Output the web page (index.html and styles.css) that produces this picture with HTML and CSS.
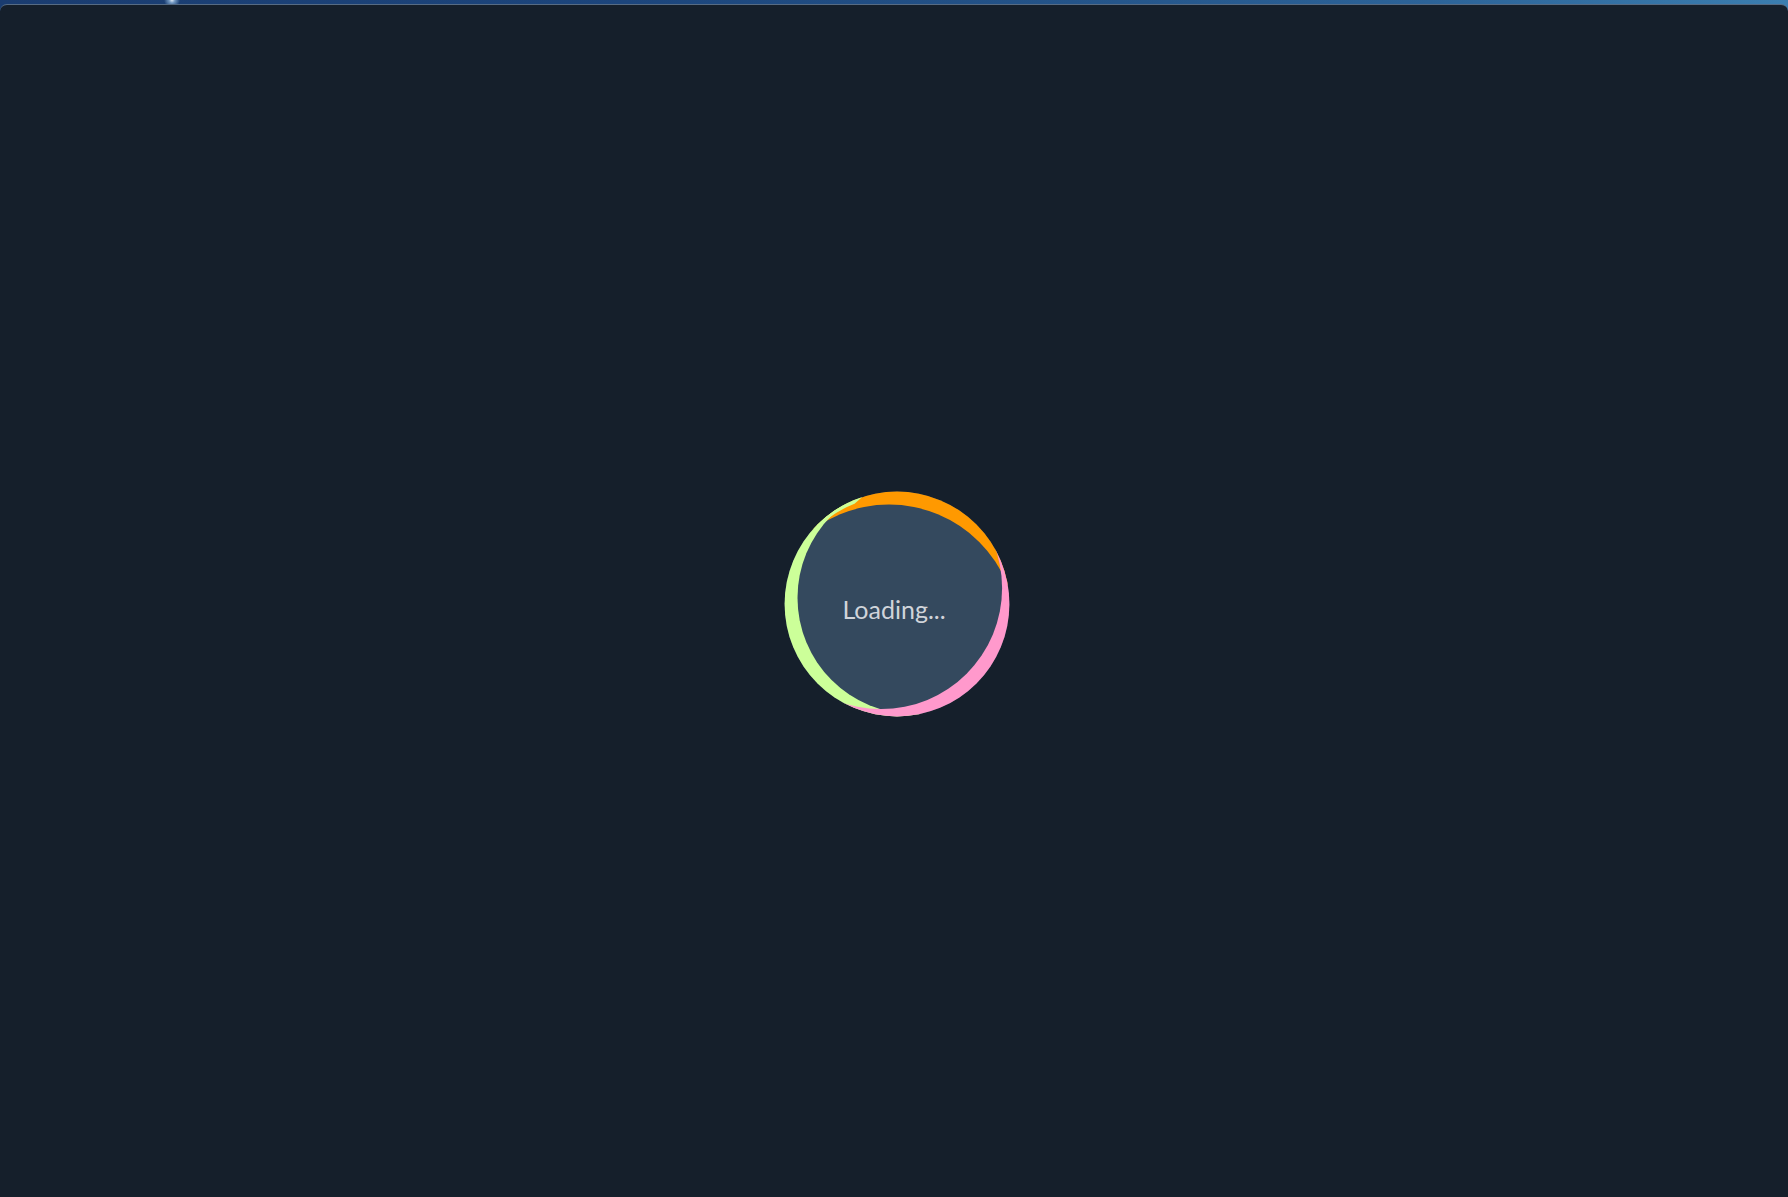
FILE: index.html
```html
<!DOCTYPE html>
<html lang="en">
<head>
<meta charset="utf-8">
<title>Loading</title>
<link rel="stylesheet" href="styles.css">
</head>
<body>
  <main class="window">
    <div class="loader">
      <svg class="loader-art" width="226" height="226" viewBox="783.5 490.5 226 226" aria-hidden="true">
        <defs>
          <mask id="m-orange" maskUnits="userSpaceOnUse" x="700" y="400" width="400" height="400">
            <rect x="700" y="400" width="400" height="400" fill="#fff"/>
            <circle cx="888.5" cy="631.7" r="127.6" fill="#000"/>
          </mask>
          <mask id="m-green" maskUnits="userSpaceOnUse" x="700" y="400" width="400" height="400">
            <rect x="700" y="400" width="400" height="400" fill="#fff"/>
            <circle cx="913.4" cy="597.3" r="116.4" fill="#000"/>
          </mask>
          <mask id="m-pink" maskUnits="userSpaceOnUse" x="700" y="400" width="400" height="400">
            <rect x="700" y="400" width="400" height="400" fill="#fff"/>
            <circle cx="880.6" cy="587.6" r="121" fill="#000"/>
          </mask>
        </defs>
        <circle cx="896.5" cy="603.5" r="112.4" fill="#34495e"/>
        <circle cx="896.5" cy="603.5" r="112.4" fill="#ff9900" mask="url(#m-orange)"/>
        <circle cx="896.5" cy="603.5" r="112.4" fill="#ccff99" mask="url(#m-green)"/>
        <path fill="#ccff99" d="M 813.0 528.3 A 112.4 112.4 0 0 1 861.8 496.6 L 854.0 503.2 A 110.2 110.2 0 0 0 814.6 529.8 Z"/>
        <circle cx="896.5" cy="603.5" r="112.4" fill="#ff99cc" mask="url(#m-pink)"/>
      </svg>
      <span class="label">Loading...</span>
    </div>
  </main>
</body>
</html>
```

FILE: styles.css
```css
html,
body {
  margin: 0;
  height: 100%;
}

body {
  overflow: hidden;
  background:
    radial-gradient(circle at 172px 0px, rgba(235, 245, 255, 0.95) 0, rgba(170, 210, 245, 0.6) 3px, rgba(40, 80, 140, 0) 8px),
    linear-gradient(90deg, #1a3c70 0%, #1c457c 35%, #245489 60%, #2c6398 80%, #3b7eb0 100%);
}

.window {
  box-sizing: border-box;
  height: calc(100% - 4px);
  margin-top: 4px;
  padding: 5px 0 0 5px;
  border-top: 1px solid rgba(140, 170, 205, 0.55);
  border-radius: 7px 7px 0 0;
  background: #151f2b;
  display: flex;
  align-items: center;
  justify-content: center;
}

.loader {
  display: grid;
  width: 226px;
  height: 226px;
}

.loader > * {
  grid-area: 1 / 1;
}

.loader-art {
  display: block;
}

.label {
  align-self: center;
  justify-self: center;
  margin: 12px 5px 0 0;
  font-family: Lato, "Noto Sans", sans-serif;
  font-size: 25px;
  line-height: 29px;
  font-weight: 400;
  color: #d0d4da;
  white-space: nowrap;
}
```
